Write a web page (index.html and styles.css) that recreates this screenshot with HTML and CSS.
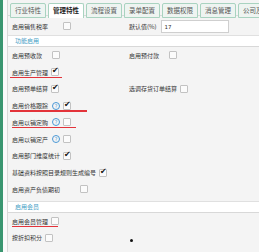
FILE: index.html
```html
<!DOCTYPE html>
<html>
  <head>
    <title>管理特性</title>
    <link rel="stylesheet" href="styles.css">
  </head>
  <body>
    <div class="app">
      <div class="rail"></div>
      <div class="gutter"></div>
      <div class="main">
        <div class="tabs">
          <span class="tab">行业特性</span>
          <span class="tab active">管理特性</span>
          <span class="tab">流程设置</span>
          <span class="tab">录单配置</span>
          <span class="tab">数据权限</span>
          <span class="tab">消息管理</span>
          <span class="tab">公司及开</span>
        </div>

        <div class="row top">
          <div class="cell"><span class="lbl">启用销售税率</span><span class="cb wide"></span></div>
          <div class="cell"><span class="lbl">默认值(%)</span><span class="field">17</span></div>
        </div>

        <div class="section">功能启用</div>
        <div class="panel">
          <div class="row">
            <div class="cell"><span class="lbl">启用预收款</span><span class="cb far"></span></div>
            <div class="cell"><span class="lbl">启用预付款</span><span class="cb far"></span></div>
          </div>
          <div class="row">
            <div class="cell"><span class="lbl mark m1">启用生产管理</span><span class="cb on"></span></div>
          </div>
          <div class="row">
            <div class="cell"><span class="lbl">启用预单结算</span><span class="cb on"></span></div>
            <div class="cell"><span class="lbl">选调存货订单结算</span><span class="cb"></span></div>
          </div>
          <div class="row">
            <div class="cell"><span class="lbl mark m2">启用价格跟踪</span><span class="help">?</span><span class="cb on"></span></div>
          </div>
          <div class="row">
            <div class="cell"><span class="lbl mark m3">启用以销定购</span><span class="help">?</span><span class="cb"></span></div>
          </div>
          <div class="row">
            <div class="cell"><span class="lbl">启用以销定产</span><span class="help">?</span><span class="cb"></span></div>
          </div>
          <div class="row">
            <div class="cell"><span class="lbl">启用部门维度统计</span><span class="cb on"></span></div>
          </div>
          <div class="row">
            <div class="cell"><span class="lbl">基础资料按照目录规则生成编号</span><span class="cb on"></span></div>
          </div>
          <div class="row">
            <div class="cell"><span class="lbl">启用资产负债期初</span><span class="cb farther"></span></div>
          </div>
        </div>

        <div class="section second">启用会员</div>
        <div class="panel">
          <div class="row">
            <div class="cell"><span class="lbl mark m4">启用会员管理</span><span class="cb"></span></div>
          </div>
          <div class="row">
            <div class="cell"><span class="lbl">按折扣积分</span><span class="cb"></span></div>
            <div class="cell"><span class="dot"></span></div>
          </div>
        </div>
      </div>
    </div>
  </body>
</html>
```

FILE: styles.css
```css
body {
  margin: 0;
  background-color: #f4f4f4;
  font-family: "Noto Sans CJK SC", "Noto Sans", sans-serif;
  font-size: 6px;
  color: #333;
  overflow: hidden;
}
.app {
  display: flex;
  height: 252px;
}
.rail {
  width: 3px;
  background-color: #3a9670;
}
.gutter {
  width: 4px;
  background-color: #fafafa;
  border-right: 1px solid #d9d9d9;
}
.main {
  flex: 1;
  min-width: 0;
  overflow: hidden;
}
.tabs {
  display: flex;
  gap: 2px;
  padding: 3px 0 0 2px;
  height: 16px;
  box-sizing: border-box;
  border-bottom: 1px solid #d4dcd8;
  white-space: nowrap;
}
.tab {
  flex-shrink: 0;
  padding: 0 4px;
  height: 13px;
  line-height: 13px;
  font-size: 6.5px;
  color: #555;
  border: 1px solid #a9d3c0;
  border-radius: 2px 2px 0 0;
  background-color: #eef4f1;
}
.tab.active {
  background-color: #fff;
  color: #222;
  font-weight: bold;
  height: 14px;
  border-bottom: none;
}
.row {
  display: grid;
  grid-template-columns: 117px 1fr;
  height: 16.75px;
  align-items: center;
  padding-left: 4px;
}
.row.top {
  height: 16px;
  margin-top: 2px;
}
.cell {
  display: flex;
  align-items: center;
  position: relative;
}
.lbl {
  white-space: nowrap;
}
.cb {
  width: 6px;
  height: 6px;
  margin-left: 3px;
  border: 1px solid #c2c2c2;
  background-color: #fbfbfb;
  border-radius: 1px;
  position: relative;
}
.cb.far { margin-left: 10px; }
.cb.wide { margin-left: 15px; }
.cb.farther { margin-left: 20px; }
.cb.on::after {
  content: "\2714";
  position: absolute;
  left: 0;
  top: -3px;
  font-size: 8px;
  color: #111;
  font-family: "DejaVu Sans", sans-serif;
}
.help {
  width: 6px;
  height: 6px;
  margin-left: 4px;
  border: 1px solid #4a98d6;
  border-radius: 50%;
  color: #4a98d6;
  font-size: 5px;
  line-height: 6px;
  text-align: center;
  font-family: "DejaVu Sans", sans-serif;
}
.help + .cb {
  margin-left: 3px;
}
.field {
  margin-left: 4px;
  width: 68px;
  height: 13px;
  line-height: 13px;
  padding-left: 3px;
  box-sizing: border-box;
  background-color: #fff;
  border: 1px solid #cfcfcf;
  font-family: "DejaVu Sans", sans-serif;
  font-size: 5.5px;
}
.section {
  margin-top: 1px;
  height: 10px;
  line-height: 10px;
  padding-left: 7px;
  background-color: #fff;
  border-top: 1px solid #e0e0e0;
  border-bottom: 1px solid #d8d8d8;
  color: #3f9cc4;
}
.section.second {
  margin-top: 3px;
}
.mark {
  position: relative;
}
.mark::after {
  content: "";
  position: absolute;
  left: -2px;
  top: 9px;
  height: 1.5px;
  background-color: #e3333a;
}
.m1::after { width: 52px; }
.m2::after { width: 77px; }
.m3::after { width: 64px; left: 0; }
.m4::after { width: 46px; left: 0; }
.dot {
  width: 3px;
  height: 3px;
  margin-left: 1px;
  margin-top: 6px;
  border-radius: 50%;
  background-color: #111;
}
```
